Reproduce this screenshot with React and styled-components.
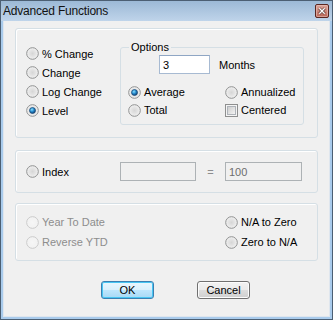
import React from "react";
import styled, { createGlobalStyle } from "styled-components";

const GlobalStyle = createGlobalStyle`
  body {
    margin: 0;
    background: #ffffff;
    font-family: "Liberation Sans", Arial, sans-serif;
  }
`;

const Window = styled.div`
  width: 333px;
  height: 320px;
  box-sizing: border-box;
  border: 1px solid #4c5f73;
  background: #a9cbec;
  display: flex;
  flex-direction: column;
`;

const TitleBar = styled.div`
  height: 20px;
  display: flex;
  align-items: center;
  justify-content: space-between;
  padding: 0 3px 0 2px;
  background: linear-gradient(#9cb9d6, #bfd4ea);
`;

const Title = styled.span`
  font-size: 12px;
  color: #111;
  letter-spacing: -0.2px;
`;

const Client = styled.div`
  flex: 1;
  margin: 0 2px 2px 2px;
  background: #f0f0f0;
  border: 1px solid #dfe6ee;
  border-top: none;
  padding: 7px 11px 0 11px;
  display: flex;
  flex-direction: column;
  font-size: 11px;
  color: #000;
`;

const Group = styled.div`
  border: 1px solid #d5dfe5;
  border-radius: 3px;
  box-shadow: inset 1px 1px 0 #fff;
  padding-left: 10px;
  margin-bottom: ${(p) => p.$mb || 0}px;
  height: ${(p) => p.$h}px;
  box-sizing: border-box;
`;

const TopGroup = styled(Group)`
  display: flex;
  align-items: flex-start;
  padding-top: 12px;
`;

const LeftCol = styled.div`
  width: 94px;
  margin-top: 3px;
  display: flex;
  flex-direction: column;
`;

const Row = styled.label`
  display: flex;
  align-items: center;
  height: ${(p) => p.$h || 19}px;
  gap: 3px;
  color: ${(p) => (p.$disabled ? "#8d8d8d" : "#000")};
  white-space: nowrap;
`;

const Options = styled.fieldset`
  width: 184px;
  box-sizing: border-box;
  margin: 0;
  border: 1px solid #d5dfe5;
  border-radius: 3px;
  padding: 1px 4px 3px 7px;
  height: 84px;
`;

const Legend = styled.legend`
  padding: 0 2px;
  margin-left: 1px;
  font-size: 11px;
  line-height: 13px;
`;

const MonthRow = styled.div`
  display: flex;
  align-items: center;
  padding-left: 31px;
  gap: 9px;
  margin-bottom: 9px;
`;

const TextBox = styled.div`
  width: ${(p) => p.$w}px;
  height: 19px;
  box-sizing: border-box;
  border: 1px solid ${(p) => (p.$disabled ? "#adb2b5" : "#a7bad2")};
  border-top-color: ${(p) => (p.$disabled ? "#adb2b5" : "#8fa6c4")};
  background: ${(p) => (p.$disabled ? "#f0f0f0" : "#fff")};
  color: ${(p) => (p.$disabled ? "#6d6d6d" : "#000")};
  padding-left: 3px;
  display: flex;
  align-items: center;
`;

const OptGrid = styled.div`
  display: grid;
  grid-template-columns: 97px 1fr;
`;

const IndexGroup = styled(Group)`
  display: flex;
  align-items: center;
`;

const IndexLabel = styled(Row)`
  width: 94px;
`;

const Equals = styled.span`
  width: 29px;
  text-align: center;
  color: #8d8d8d;
`;

const BottomGrid = styled(Group)`
  display: grid;
  grid-template-columns: 199px 1fr;
  grid-auto-rows: 20px;
  padding-top: 8px;
`;

const ButtonBar = styled.div`
  display: flex;
  padding: 20px 0 0 86px;
  gap: 43px;
`;

const Button = styled.button`
  width: 53px;
  height: 18px;
  padding: 0;
  font-family: "Liberation Sans", Arial, sans-serif;
  font-size: 11px;
  color: #000;
  border-radius: 3px;
  border: 1px solid ${(p) => (p.$default ? "#3c7fb1" : "#707070")};
  background: ${(p) =>
    p.$default
      ? "linear-gradient(#eaf6fd 0%, #d9f0fc 50%, #bee6fd 51%, #a7d9f5 100%)"
      : "linear-gradient(#f2f2f2 0%, #ebebeb 50%, #dddddd 51%, #cfcfcf 100%)"};
  box-shadow: inset 0 0 0 1px ${(p) => (p.$default ? "#48c6f3" : "#fcfcfc")};
`;

const Radio = ({ checked, disabled }) => (
  <svg width="13" height="13" viewBox="0 0 13 13">
    <defs>
      <radialGradient id={`rg${disabled ? "d" : "n"}`} cx="50%" cy="50%" r="50%">
        <stop offset="0%" stopColor={disabled ? "#f6f6f6" : "#d6d6d6"} />
        <stop offset="70%" stopColor={disabled ? "#f2f2f2" : "#e8e8e8"} />
        <stop offset="100%" stopColor={disabled ? "#fafafa" : "#f8f8f8"} />
      </radialGradient>
      <radialGradient id="dot" cx="40%" cy="35%" r="65%">
        <stop offset="0%" stopColor="#8be0ff" />
        <stop offset="50%" stopColor="#2a8fd0" />
        <stop offset="100%" stopColor="#0c3f75" />
      </radialGradient>
    </defs>
    <circle
      cx="6.5"
      cy="6.5"
      r="5.8"
      fill={`url(#rg${disabled ? "d" : "n"})`}
      stroke={disabled ? "#c8c8c8" : "#8e8f8f"}
      strokeWidth="1"
    />
    {checked && (
      <circle cx="6.5" cy="6.5" r="3" fill="url(#dot)" stroke="#1b4a78" strokeWidth="0.7" />
    )}
  </svg>
);

const Check = () => (
  <svg width="13" height="13" viewBox="0 0 13 13">
    <defs>
      <linearGradient id="cb" x1="0" y1="0" x2="1" y2="1">
        <stop offset="0%" stopColor="#cbcbcb" />
        <stop offset="100%" stopColor="#f6f6f6" />
      </linearGradient>
    </defs>
    <rect x="0.5" y="0.5" width="12" height="12" fill="#f4f4f4" stroke="#8e8f8f" />
    <rect x="2.5" y="2.5" width="8" height="8" fill="url(#cb)" stroke="#aeb3b9" strokeWidth="1" />
  </svg>
);

const CloseButton = () => (
  <svg width="14" height="14" viewBox="0 0 14 14">
    <defs>
      <linearGradient id="cl" x1="0" y1="0" x2="0" y2="1">
        <stop offset="0%" stopColor="#dca79e" />
        <stop offset="100%" stopColor="#b96455" />
      </linearGradient>
    </defs>
    <rect x="0.5" y="0.5" width="13" height="13" rx="1.5" fill="url(#cl)" stroke="#5a2620" />
    <rect x="1.5" y="1.5" width="11" height="11" rx="1" fill="none" stroke="#e8c2ba" strokeWidth="0.6" />
    <path d="M4.3 4.3 L9.7 9.7 M9.7 4.3 L4.3 9.7" stroke="#3d1a16" strokeWidth="2.6" />
    <path d="M4.3 4.3 L9.7 9.7 M9.7 4.3 L4.3 9.7" stroke="#ffffff" strokeWidth="1.5" />
  </svg>
);

const Option = ({ label, checked, disabled, h }) => (
  <Row $h={h} $disabled={disabled}>
    <Radio checked={checked} disabled={disabled} />
    {label}
  </Row>
);

export default function App() {
  return (
    <>
      <GlobalStyle />
      <Window>
        <TitleBar>
          <Title>Advanced Functions</Title>
          <CloseButton />
        </TitleBar>
        <Client>
          <TopGroup $h={110} $mb={12}>
            <LeftCol>
              <Option label="% Change" />
              <Option label="Change" />
              <Option label="Log Change" />
              <Option label="Level" checked />
            </LeftCol>
            <Options>
              <Legend>Options</Legend>
              <MonthRow>
                <TextBox $w={51}>3</TextBox>
                <span>Months</span>
              </MonthRow>
              <OptGrid>
                <Option label="Average" checked h={18} />
                <Option label="Annualized" h={18} />
                <Option label="Total" h={18} />
                <Row $h={18}>
                  <Check />
                  Centered
                </Row>
              </OptGrid>
            </Options>
          </TopGroup>
          <IndexGroup $h={43} $mb={10}>
            <IndexLabel>
              <Radio />
              Index
            </IndexLabel>
            <TextBox $w={76} $disabled />
            <Equals>=</Equals>
            <TextBox $w={77} $disabled>100</TextBox>
          </IndexGroup>
          <BottomGrid $h={58}>
            <Option label="Year To Date" disabled h={20} />
            <Option label="N/A to Zero" h={20} />
            <Option label="Reverse YTD" disabled h={20} />
            <Option label="Zero to N/A" h={20} />
          </BottomGrid>
          <ButtonBar>
            <Button $default>OK</Button>
            <Button>Cancel</Button>
          </ButtonBar>
        </Client>
      </Window>
    </>
  );
}
